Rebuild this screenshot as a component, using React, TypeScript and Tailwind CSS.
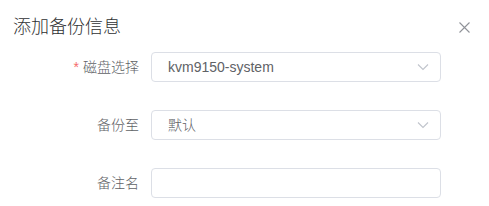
import React from 'react';

const font = { fontFamily: '"Liberation Sans", "Noto Sans CJK SC", sans-serif' };

function Chevron(): JSX.Element {
  return (
    <svg width="12" height="8" viewBox="0 0 12 8" className="shrink-0">
      <polyline points="1,1.5 6,6.5 11,1.5" fill="none" stroke="#c0c4cc" strokeWidth="1.1" />
    </svg>
  );
}

interface RowProps {
  label: string;
  required?: boolean;
  value?: string;
  select?: boolean;
}

function Row({ label, required, value, select }: RowProps): JSX.Element {
  return (
    <div className="flex items-center h-[30px]">
      <div className="w-[139px] text-right text-[14px] font-light text-[#606266] leading-[30px]">
        {required ? <span className="text-[#f56c6c] mr-1">*</span> : null}
        {label}
      </div>
      <div className="ml-3 w-[290px] h-[30px] flex items-center justify-between border border-[#dcdfe6] rounded-[4px] pl-[16px] pr-[11px] bg-white">
        <span className="text-[14px] font-light text-[#606266]">{value ?? ''}</span>
        {select ? <Chevron /> : null}
      </div>
    </div>
  );
}

export default function App(): JSX.Element {
  return (
    <div className="w-[489px] h-[206px] bg-white overflow-hidden" style={font}>
      <div className="flex items-center justify-between pl-[13px] pr-[19px] pt-[15px] h-[39px]">
        <span className="text-[18px] font-light leading-[24px] text-[#303133]">添加备份信息</span>
        <svg width="11" height="11" viewBox="0 0 11 11">
          <path d="M0.5 0.5 L10.5 10.5 M10.5 0.5 L0.5 10.5" stroke="#909399" strokeWidth="1.1" />
        </svg>
      </div>
      <div className="flex flex-col gap-[28px] pt-[13px]">
        <Row label="磁盘选择" required value="kvm9150-system" select />
        <Row label="备份至" value="默认" select />
        <Row label="备注名" />
      </div>
    </div>
  );
}
